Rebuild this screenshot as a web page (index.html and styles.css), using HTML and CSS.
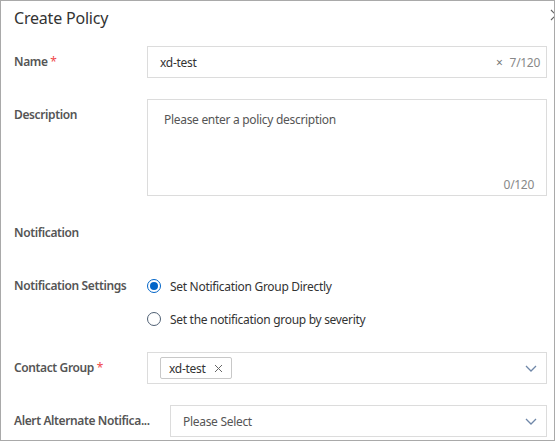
FILE: index.html
```html
<!DOCTYPE html>
<html lang="en">
<head>
<meta charset="utf-8">
<title>Create Policy</title>
<link rel="stylesheet" href="styles.css">
</head>
<body>
<div class="dialog">
  <div class="header">
    <h1 class="title">Create Policy</h1>
    <span class="close" aria-label="Close">
      <svg width="12" height="12" viewBox="0 0 12 12"><path d="M1 1 L11 11 M11 1 L1 11" stroke="#666" stroke-width="1.2" fill="none"/></svg>
    </span>
  </div>
  <div class="form">
    <div class="row">
      <label class="label">Name <span class="req">*</span></label>
      <div class="control input name-input">
        <span class="value">xd-test</span>
        <span class="clear">×</span>
        <span class="count">7/120</span>
      </div>
    </div>
    <div class="row">
      <label class="label">Description</label>
      <div class="control textarea">
        <span class="placeholder">Please enter a policy description</span>
        <span class="count tcount">0/120</span>
      </div>
    </div>
    <div class="row">
      <label class="label">Notification</label>
    </div>
    <div class="row radio-row">
      <label class="label">Notification Settings</label>
      <div class="radios">
        <div class="radio-item"><span class="radio checked"></span><span>Set Notification Group Directly</span></div>
        <div class="radio-item"><span class="radio"></span><span>Set the notification group by severity</span></div>
      </div>
    </div>
    <div class="row">
      <label class="label">Contact Group <span class="req">*</span></label>
      <div class="control input select">
        <span class="tag">xd-test <svg class="tag-x" width="9" height="9" viewBox="0 0 9 9"><path d="M1 1 L8 8 M8 1 L1 8" stroke="#666" stroke-width="1" fill="none"/></svg></span>
        <svg class="chev" width="12" height="7" viewBox="0 0 12 7"><path d="M1 1 L6 6 L11 1" stroke="#6f87a8" stroke-width="1.3" fill="none"/></svg>
      </div>
    </div>
    <div class="row">
      <label class="label wide" title="Alert Alternate Notification Group">Alert Alternate Notifica...</label>
      <div class="control input select">
        <span class="placeholder sel">Please Select</span>
        <svg class="chev" width="12" height="7" viewBox="0 0 12 7"><path d="M1 1 L6 6 L11 1" stroke="#6f87a8" stroke-width="1.3" fill="none"/></svg>
      </div>
    </div>
  </div>
</div>
</body>
</html>
```

FILE: styles.css
```css
html, body {
  margin: 0;
  padding: 0;
  background: #ffffff;
}
body {
  font-family: "Segoe UI", "Noto Sans", "Open Sans", sans-serif;
  font-size: 12px;
  letter-spacing: -0.3px;
  color: #333333;
}
.dialog {
  position: relative;
  width: 555px;
  height: 441px;
  box-sizing: border-box;
  border: 1px solid #a9a9a9;
  overflow: hidden;
  background: #fff;
}
.header {
  height: 45px;
  box-sizing: border-box;
  padding: 7px 13px 0;
}
.title {
  margin: 0;
  font-size: 16px;
  font-weight: 400;
  letter-spacing: -0.2px;
  line-height: 20px;
  color: #333;
}
.close {
  position: absolute;
  left: 549px;
  top: 8px;
  width: 12px;
  height: 12px;
}
.close svg { display: block; }
.form {
  display: flex;
  flex-direction: column;
  gap: 21px;
  padding: 0 7px 0 13px;
}
.row {
  display: flex;
  align-items: flex-start;
  min-height: 32px;
}
.label {
  flex: 0 0 133px;
  width: 133px;
  line-height: 32px;
  font-weight: 600;
  letter-spacing: -0.38px;
  color: #555;
  white-space: nowrap;
}
.label.wide {
  flex: 0 0 140px;
  width: 140px;
  margin-right: 16px;
}
.req { color: #f0484a; font-weight: 400; }
.control {
  flex: 1;
  box-sizing: border-box;
  border: 1px solid #dcdcdc;
  background: #fff;
  position: relative;
}
.input {
  height: 32px;
  display: flex;
  align-items: center;
  padding: 0 12px;
}
.name-input { padding-right: 6px; }
.value { flex: 1; color: #333; }
.clear { color: #777; font-size: 12px; margin-right: 7px; }
.count { color: #888; }
.textarea {
  height: 97px;
  padding: 11px 16px;
}
.placeholder { color: #555; }
.tcount {
  position: absolute;
  right: 12px;
  bottom: 2px;
}
.radios {
  display: flex;
  flex-direction: column;
  gap: 17px;
  padding: 8px 0 4px;
}
.radio-item {
  display: flex;
  align-items: center;
  height: 16px;
  gap: 9px;
  color: #333;
}
.radio {
  width: 14px;
  height: 14px;
  box-sizing: border-box;
  border: 1px solid #4f5f73;
  border-radius: 50%;
  background: #fff;
  position: relative;
}
.radio.checked { border-color: #0064c8; }
.radio.checked::after {
  content: "";
  position: absolute;
  left: 2px;
  top: 2px;
  width: 8px;
  height: 8px;
  border-radius: 50%;
  background: #0064c8;
}
.select { padding: 0 9px 0 12px; }
.select .chev { margin-left: auto; display: block; }
.tag {
  display: inline-flex;
  align-items: center;
  gap: 9px;
  height: 22px;
  box-sizing: border-box;
  padding: 0 8px;
  border: 1px solid #c8c8c8;
  border-radius: 2px;
  color: #333;
}
.tag-x { display: block; }
.sel { color: #555; }
```
